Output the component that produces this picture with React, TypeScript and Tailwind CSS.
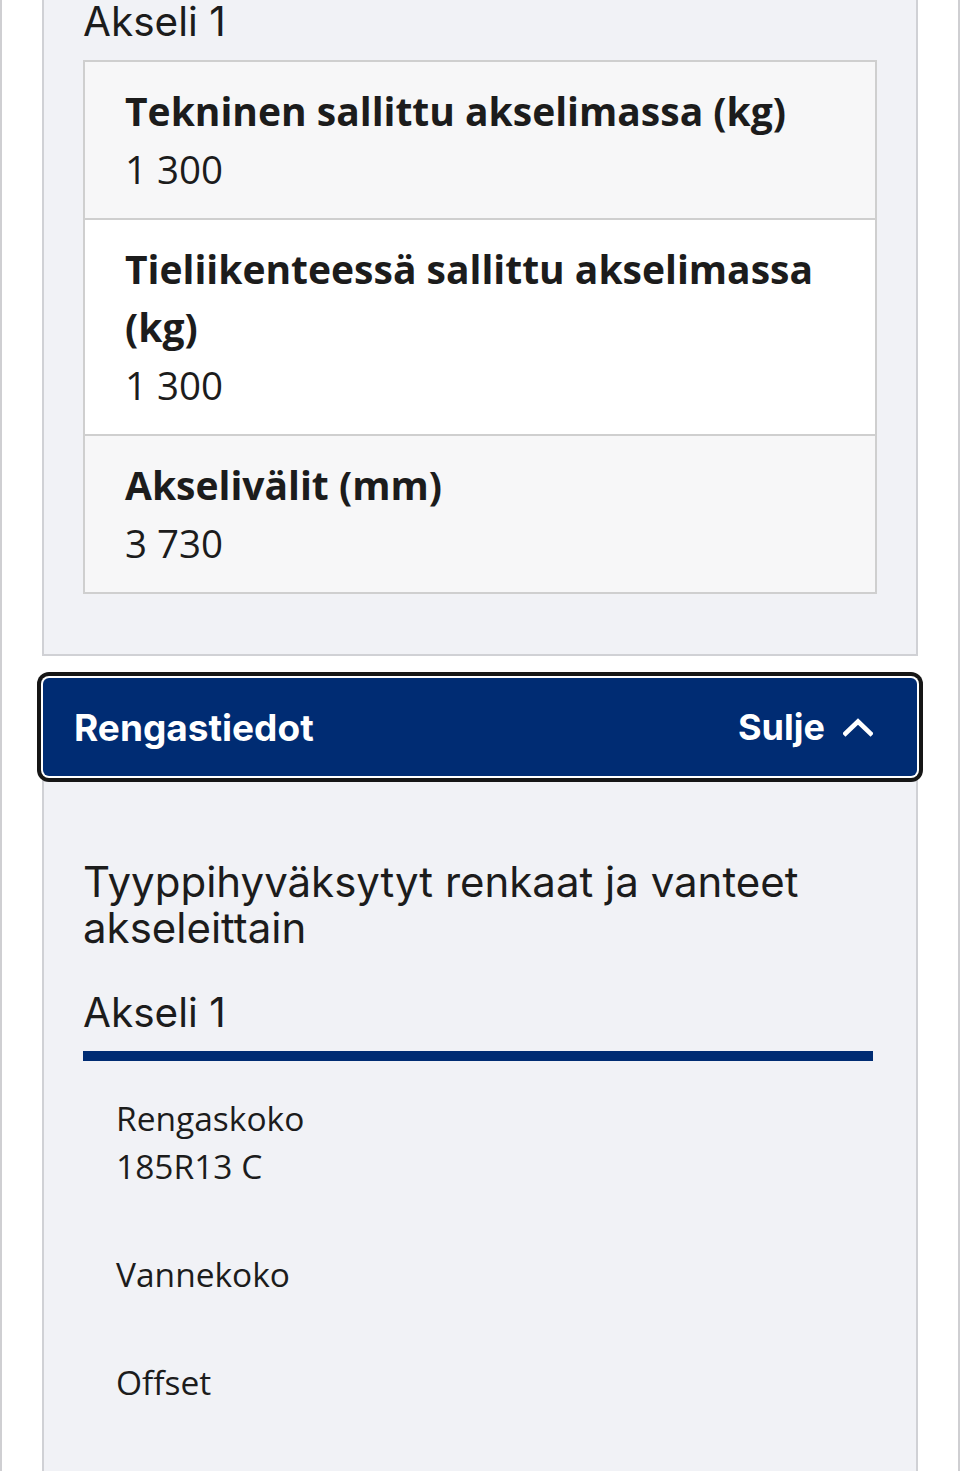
import React from "react";

const body = { fontFamily: '"Open Sans", "Noto Sans", sans-serif' };
const head = { fontFamily: 'Inter, "Noto Sans", sans-serif' };

function Row({ label, value, alt }: { label: string; value: string; alt: boolean }) {
  return (
    <div
      className={`px-[40px] py-[20px] leading-[58px] text-[#1c1c1c] ${alt ? "bg-[#f7f7f8]" : "bg-white"}`}
      style={body}
    >
      <div className="font-bold text-[39px]">{label}</div>
      <div className="text-[38.5px]">{value}</div>
    </div>
  );
}

function Item({ label, value }: { label: string; value?: string }) {
  return (
    <div className="text-[33.5px] leading-[48px] text-[#1c1c1c]" style={body}>
      <div>{label}</div>
      {value ? <div>{value}</div> : null}
    </div>
  );
}

export default function App() {
  return (
    <div className="w-full min-h-[1471px] bg-white border-x-2 border-[#cfcfd2] px-[40px] overflow-hidden">
      <div className="border-x-2 border-b-2 border-[#d0d1d5] bg-[#f1f2f6] px-[39px] pb-[60px]">
        <h3 className="text-[40.5px] leading-[43px] text-[#1c1c1c] font-normal mb-[17px]" style={head}>
          Akseli 1
        </h3>
        <div className="border-2 border-[#cfcfcf] divide-y-2 divide-[#cfcfcf]">
          <Row label="Tekninen sallittu akselimassa (kg)" value="1 300" alt />
          <Row label="Tieliikenteessä sallittu akselimassa (kg)" value="1 300" alt={false} />
          <Row label="Akselivälit (mm)" value="3 730" alt />
        </div>
      </div>

      <div className="mt-[22px]">
        <button
          type="button"
          className="relative z-10 mx-[1px] w-[calc(100%-2px)] h-[98px] rounded-[6px] bg-[#002c73] flex items-center justify-between pl-[31px] pr-[44px] text-white shadow-[0_0_0_2px_#ffffff,0_0_0_6px_#161616]"
          style={head}
        >
          <span className="text-[37px] font-bold leading-none">Rengastiedot</span>
          <span className="flex items-center gap-[18px]">
            <span className="text-[36px] font-bold leading-none">Sulje</span>
            <svg width="30" height="20" viewBox="0 0 30 20" fill="none">
              <polyline points="2.5,16.5 15,4.5 27.5,16.5" stroke="#ffffff" strokeWidth="4.6" strokeLinecap="square" strokeLinejoin="miter" />
            </svg>
          </span>
        </button>
        <div className="border-x-2 border-[#d0d1d5] bg-[#f1f2f6] px-[39px] pt-[83px] pb-[100px]">
          <h3 className="text-[42px] leading-[46px] text-[#1c1c1c] font-normal" style={head}>
            Tyyppihyväksytyt renkaat ja vanteet akseleittain
          </h3>
          <h4 className="mt-[40px] text-[40.5px] leading-[43px] text-[#1c1c1c] font-normal" style={head}>
            Akseli 1
          </h4>
          <div className="mt-[17px] mr-[4px] h-[10px] bg-[#002c73]" />
          <div className="pl-[33px] pt-[33px] flex flex-col gap-[60px]">
            <Item label="Rengaskoko" value="185R13 C" />
            <Item label="Vannekoko" />
            <Item label="Offset" />
          </div>
        </div>
      </div>
    </div>
  );
}
